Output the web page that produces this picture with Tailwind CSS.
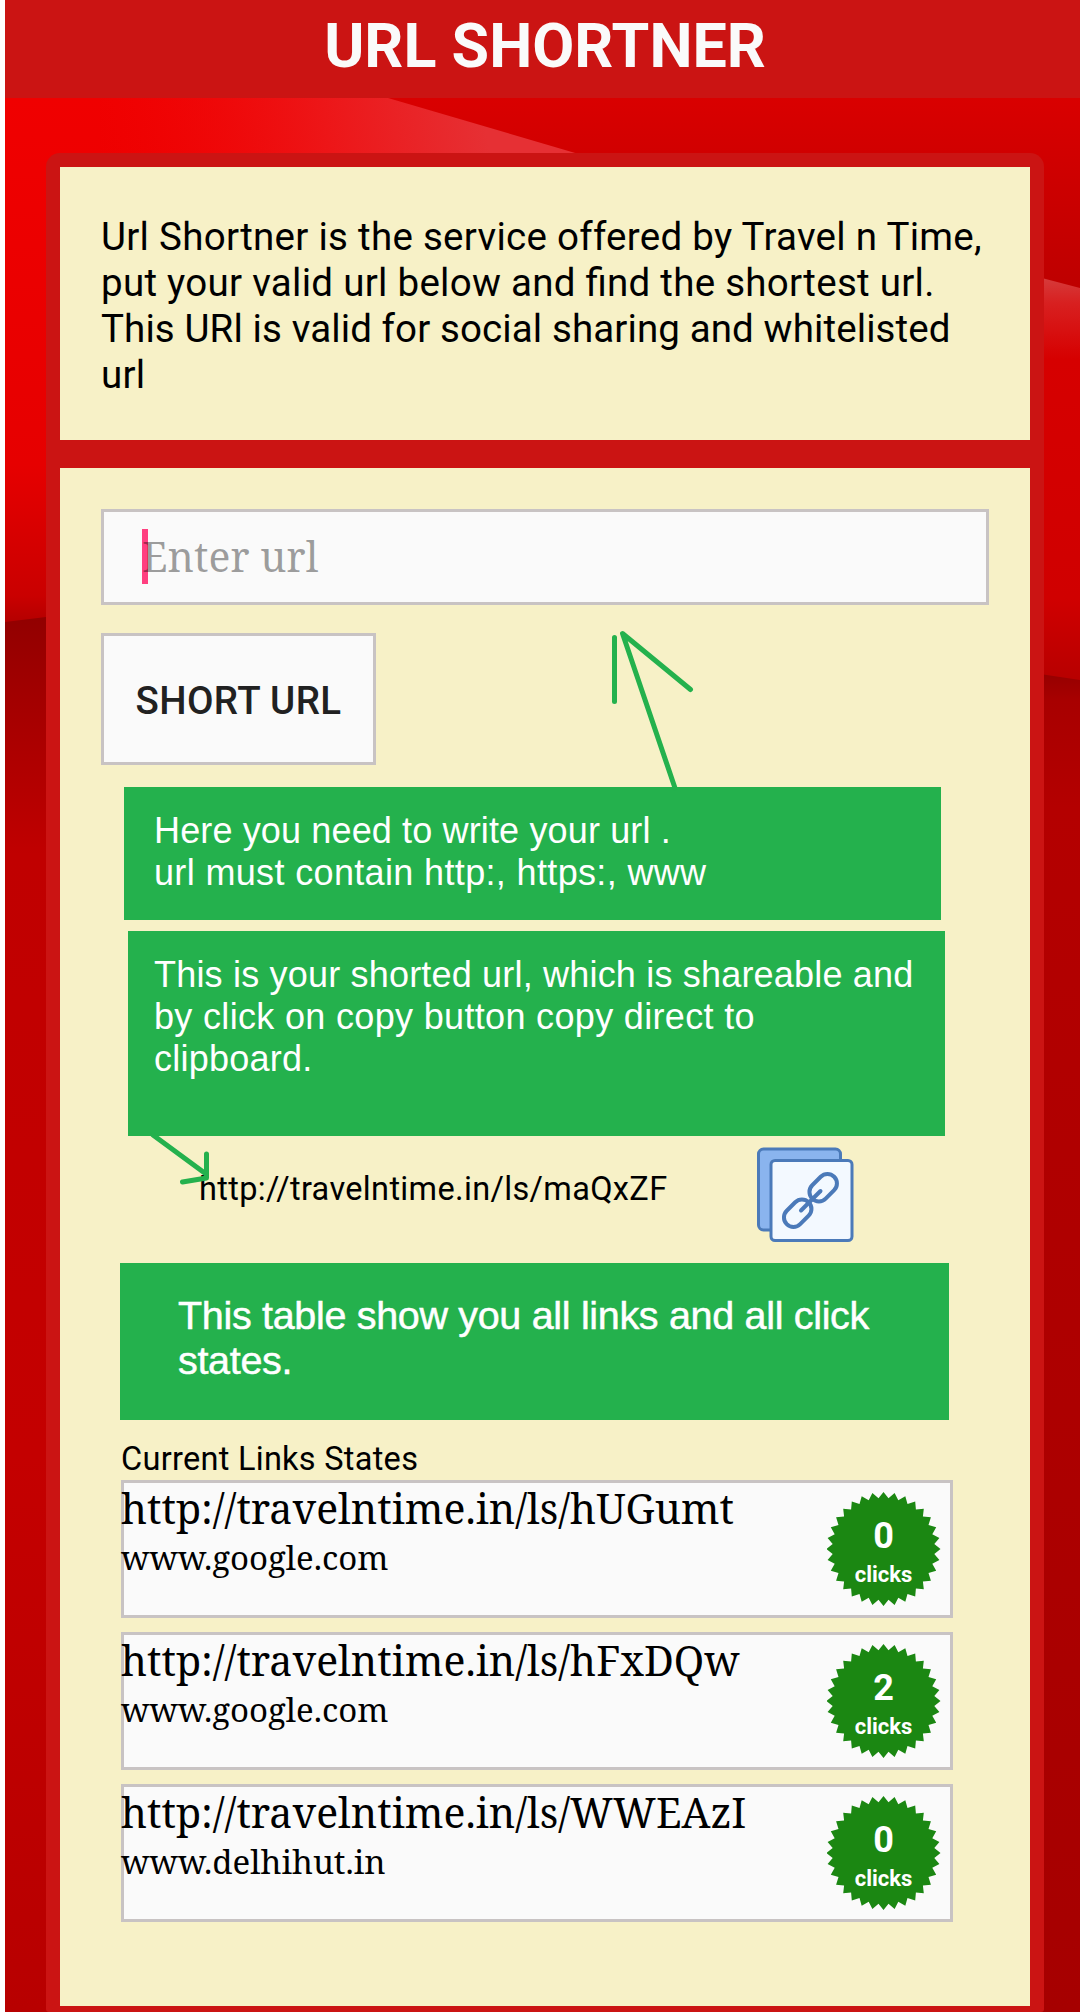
<!DOCTYPE html>
<html lang="en">
<head>
<meta charset="utf-8">
<title>URL Shortner</title>
<script src="https://cdn.jsdelivr.net/npm/@tailwindcss/browser@4"></script>
</head>
<body class="bg-white font-['Roboto',sans-serif] text-black">
<div class="relative h-[2016px] w-[1080px] overflow-hidden pl-[5px] pb-1">
  <!-- red wave backdrop -->
  <svg class="absolute left-0 top-0" width="1080" height="2016" viewBox="0 0 1080 2016">
    <defs>
      <linearGradient id="l1" x1="0" y1="98" x2="0" y2="622" gradientUnits="userSpaceOnUse"><stop offset="0" stop-color="#f00000"/><stop offset=".7" stop-color="#e60000"/><stop offset=".95" stop-color="#ca0000"/><stop offset="1" stop-color="#b40000"/></linearGradient>
      <linearGradient id="l2" x1="0" y1="617" x2="0" y2="2012" gradientUnits="userSpaceOnUse"><stop offset="0" stop-color="#920000"/><stop offset=".07" stop-color="#a60000"/><stop offset=".17" stop-color="#c00000"/><stop offset=".6" stop-color="#c40000"/><stop offset="1" stop-color="#b80000"/></linearGradient>
      <linearGradient id="r0" x1="0" y1="98" x2="0" y2="286" gradientUnits="userSpaceOnUse"><stop offset="0" stop-color="#d90000"/><stop offset="1" stop-color="#be0000"/></linearGradient>
      <linearGradient id="r1" x1="0" y1="279" x2="0" y2="678" gradientUnits="userSpaceOnUse"><stop offset="0" stop-color="#d63a3a"/><stop offset=".06" stop-color="#d82020"/><stop offset=".2" stop-color="#d60000"/><stop offset=".8" stop-color="#d00000"/><stop offset="1" stop-color="#b80000"/></linearGradient>
      <linearGradient id="r2" x1="0" y1="674" x2="0" y2="2012" gradientUnits="userSpaceOnUse"><stop offset="0" stop-color="#960000"/><stop offset=".02" stop-color="#a80000"/><stop offset=".1" stop-color="#b40000"/><stop offset="1" stop-color="#a60000"/></linearGradient>
      <linearGradient id="t" x1="100" y1="190" x2="484" y2="118" gradientUnits="userSpaceOnUse"><stop offset="0" stop-color="#f00505" stop-opacity="0"/><stop offset=".6" stop-color="#ed1618"/><stop offset="1" stop-color="#e63034"/></linearGradient>
    </defs>
    <path d="M5 500H500V2012H5z" fill="url(#l2)"/>
    <path d="M1040 500H1080V2012H1040z" fill="url(#r2)"/>
    <path d="M5 98H700V617H46L5 622z" fill="url(#l1)"/>
    <path d="M100 98H640V165H100z" fill="url(#t)"/>
    <path d="M1040 270H1080V680L1040 674z" fill="url(#r1)"/>
    <path d="M388 98H1080V288L1040 277.500L582 155z" fill="url(#r0)"/>
  </svg>

  <header class="relative h-[98px] bg-[#cb1413] pt-[11px] pl-[5px] text-center text-[61px] leading-[70px] font-bold text-[#fafafa]">URL SHORTNER</header>

  <main class="relative mt-[55px] ml-[41px] w-[998px] rounded-t-[14px] rounded-b-[3px] bg-[#cb1413] px-[14px] pt-[14px] pb-[6px]">
    <section class="h-[273px] bg-[#f7f1c7] pt-[47px] pl-[41px] text-[38.5px] leading-[46px] tracking-[0.28px] whitespace-nowrap">
      <p>Url Shortner is the service offered by Travel n Time,<br>put your valid url below and <span class="tracking-normal">fi</span>nd the shortest url.<br><span class="tracking-[0.11px]">This URl is valid for social sharing and whitelisted</span><br>url</p>
    </section>

    <section class="mt-7 h-[1538px] bg-[#f7f1c7] pt-[41px] pl-[41px]">
      <div class="flex h-24 w-[888px] items-center border-3 border-[#c8c3c3] bg-[#fafafa] pl-[38px] font-['Noto_Serif','DejaVu_Serif_Condensed','DejaVu_Serif',serif] text-[41px] text-black/38">
        <span class="mb-[2px] h-[55px] w-[6px] bg-[#ff3f80]"></span><span class="-ml-[6px]">Enter url</span>
      </div>
      <button class="mt-7 block h-[132px] w-[275px] border-3 border-[#c8c3c3] bg-[#fafafa] pt-1 text-[38.5px] font-medium tracking-[0.4px] text-[#212121]"><span>SHORT URL</span></button>

      <div class="mt-[22px] ml-[23px] h-[133px] w-[817px] bg-[#24b14d] pt-[23px] pl-[30px] font-['Liberation_Sans',sans-serif] text-[36px] leading-[42px] text-white whitespace-nowrap"><span class="tracking-[0.14px]">Here you need to write your url .</span><br><span class="tracking-[0.35px]">url must contain http:, https:, www</span></div>
      <div class="mt-[11px] ml-[27px] h-[205px] w-[817px] bg-[#24b14d] pt-[23px] pl-[26px] font-['Liberation_Sans',sans-serif] text-[36px] leading-[42px] text-white whitespace-nowrap"><span class="tracking-[0.19px]">This is your shorted url, which is shareable and</span><br><span class="tracking-[0.33px]">by click on copy button copy direct to</span><br><span class="tracking-[0.25px]">clipboard.</span></div>

      <div class="flex h-[127px] pl-[98px]">
        <span class="w-[556px] pt-[33px] text-[32.5px] leading-[40px] tracking-[0.34px] whitespace-nowrap">http://travelntime.in/ls/maQxZF</span>
        <svg class="mt-2" width="104" height="104" viewBox="755 1144 104 104" fill="none" stroke="#4b7ab9">
          <rect x="758.5" y="1149" width="82" height="81" rx="5" fill="#8ab4ee" stroke-width="3"/>
          <rect x="771" y="1160.500" width="81" height="80" rx="4" fill="#f3f9ff" stroke-width="3"/>
          <g stroke-width="4" stroke-linecap="round">
            <rect x="-15.500" y="-9.500" width="31" height="19" rx="9.500" transform="translate(823.2 1187.700) rotate(-45)"/>
            <rect x="-15.500" y="-9.500" width="31" height="19" rx="9.500" transform="translate(797.700 1213.200) rotate(-45)"/>
            <path d="M801 1210.500L820.500 1191"/>
          </g>
        </svg>
      </div>

      <div class="ml-[19px] h-[157px] w-[829px] bg-[#24b14d] pt-[30px] pl-[58px] font-['Liberation_Sans',sans-serif] text-[39.5px] leading-[45px] tracking-[-0.32px] text-white whitespace-nowrap [-webkit-text-stroke:0.5px_white]">This table show you all links and all click<br>states.</div>

      <h2 class="mt-[19px] mb-px ml-5 h-10 text-[32.5px] leading-10 tracking-[0.28px] whitespace-nowrap">Current Links States</h2>
      <ul id="links" class="ml-5 flex w-[832px] flex-col gap-[14px] font-['Noto_Serif','DejaVu_Serif_Condensed','DejaVu_Serif',serif]"></ul>
    </section>
  </main>

  <!-- hint arrows -->
  <svg class="absolute left-0 top-0" width="1080" height="1300" viewBox="0 0 1080 1300" fill="none" stroke="#24b14d" stroke-width="5" stroke-linecap="round" stroke-linejoin="round">
    <path d="M675 788L622.500 633.500L690.500 689.500M614.500 637.500V701.500"/>
    <path d="M153 1135L206 1174M206.500 1154V1178L182.500 1182"/>
  </svg>
</div>

<script>
  const links = [
    ['http://travelntime.in/ls/hUGumt', 'www.google.com', 0],
    ['http://travelntime.in/ls/hFxDQw', 'www.google.com', 2],
    ['http://travelntime.in/ls/WWEAzI', 'www.delhihut.in', 0],
  ];
  const star = Array.from({ length: 64 }, (_, i) => {
    const r = i % 2 ? 51 : 57, a = i * Math.PI / 32 - Math.PI / 2;
    return (56.5 + r * Math.cos(a)).toFixed(1) + ',' + (57 + r * Math.sin(a)).toFixed(1);
  }).join(' ');
  document.getElementById('links').innerHTML = links.map(([url, site, n]) => `
    <li class="flex h-[138px] justify-between border-3 border-[#c8c3c3] bg-[#fafafa]">
      <div class="-ml-[3px] whitespace-nowrap">
        <p class="h-[50px] text-[41px] leading-[50px]">${url}</p>
        <p class="mt-[2px] text-[33px] leading-[46px]">${site}</p>
      </div>
      <div class="relative mt-[9px] mr-[9px] h-[114px] w-[114px] pr-px text-center font-['Roboto',sans-serif] font-bold text-white">
        <svg class="absolute inset-0" width="114" height="114" viewBox="0 0 114 114"><polygon points="${star}" fill="#1b8712"/></svg>
        <p class="relative mt-[23px] text-[36px] leading-[42px]">${n}</p>
        <p class="relative mt-px text-[22px] leading-[34px]">clicks</p>
      </div>
    </li>`).join('');
</script>
</body>
</html>
